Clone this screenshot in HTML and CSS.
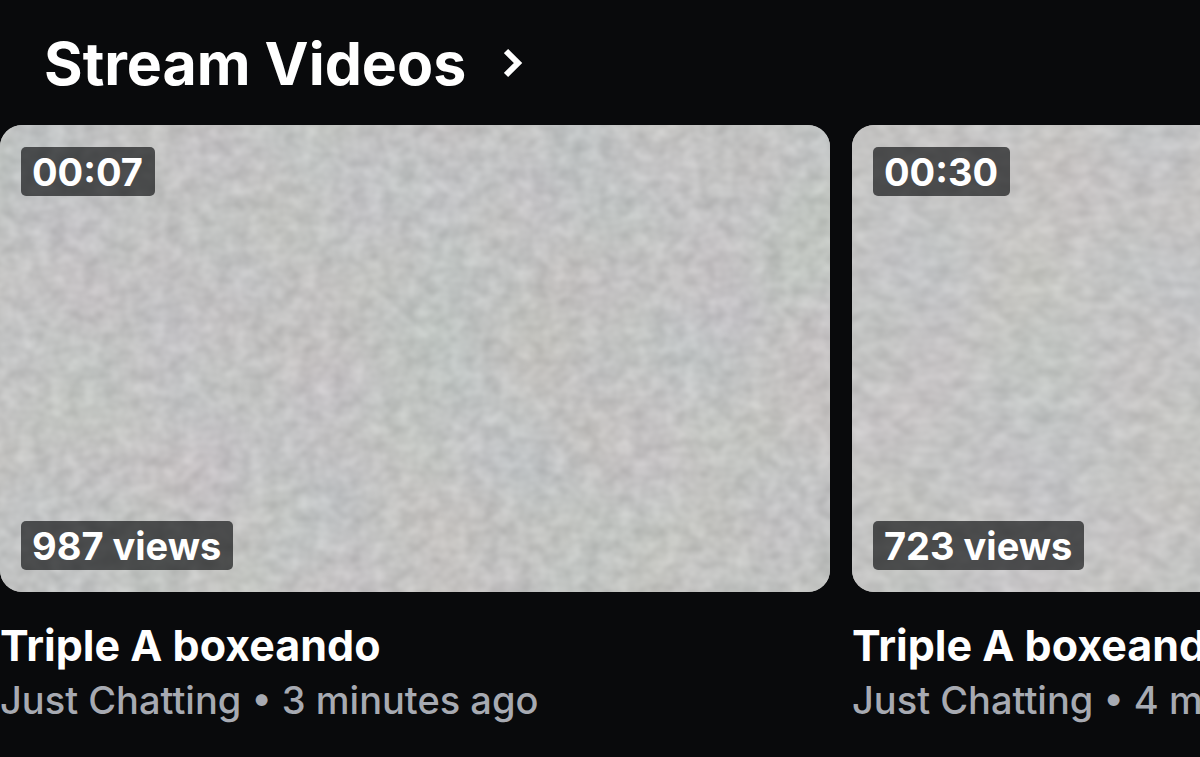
FILE: index.html
```html
<!DOCTYPE html>
<html lang="en">

<head>
    <meta charset="utf-8">
    <meta name="viewport" content="width=device-width, initial-scale=1.0">
    <title>Stream Videos</title>
    <link rel="stylesheet" href="styles.css">
</head>

<body>
    <section class="videos">
        <h2 class="videos-heading">
            <a href="#" class="videos-link">
                Stream Videos
                <svg class="chevron" viewBox="0 0 20 32" aria-hidden="true">
                    <path d="M2 3 L14 15 L2 27" />
                </svg>
            </a>
        </h2>

        <div class="video-row">
            <article class="video-card">
                <a href="#" class="thumb" aria-label="Triple A boxeando">
                    <svg class="static" aria-hidden="true">
                        <filter id="static-a" x="0" y="0" width="100%" height="100%" color-interpolation-filters="sRGB">
                            <feTurbulence type="fractalNoise" baseFrequency="0.06 0.07" numOctaves="2" seed="4" result="grain" />
                            <feColorMatrix in="grain" values="0.15 0 0 0 0.685  0.15 0 0 0 0.688  0.15 0 0 0 0.685  0 0 0 0 1" result="gray" />
                            <feTurbulence type="fractalNoise" baseFrequency="0.008" numOctaves="2" seed="9" result="tint" />
                            <feColorMatrix in="tint" values="0.04 0 0 0 0.48  0 0.03 0 0 0.485  0 0 0.04 0 0.48  0 0 0 0 1" result="soft" />
                            <feComposite in="gray" in2="soft" operator="arithmetic" k2="1" k3="1" k4="-0.5" />
                        </filter>
                        <rect width="100%" height="100%" filter="url(#static-a)" />
                    </svg>
                    <span class="badge badge-time">00:07</span>
                    <span class="badge badge-views">987 views</span>
                </a>
                <h3 class="video-title">Triple A boxeando</h3>
                <p class="video-meta">Just Chatting • 3 minutes ago</p>
            </article>

            <article class="video-card">
                <a href="#" class="thumb" aria-label="Triple A boxeando">
                    <svg class="static" aria-hidden="true">
                        <filter id="static-b" x="0" y="0" width="100%" height="100%" color-interpolation-filters="sRGB">
                            <feTurbulence type="fractalNoise" baseFrequency="0.05 0.07" numOctaves="2" seed="21" result="grain" />
                            <feColorMatrix in="grain" values="0.14 0 0 0 0.698  0.14 0 0 0 0.698  0.14 0 0 0 0.696  0 0 0 0 1" result="gray" />
                            <feTurbulence type="fractalNoise" baseFrequency="0.008" numOctaves="2" seed="30" result="tint" />
                            <feColorMatrix in="tint" values="0.03 0 0 0 0.485  0 0.02 0 0 0.49  0 0 0.03 0 0.485  0 0 0 0 1" result="soft" />
                            <feComposite in="gray" in2="soft" operator="arithmetic" k2="1" k3="1" k4="-0.5" />
                        </filter>
                        <rect width="100%" height="100%" filter="url(#static-b)" />
                    </svg>
                    <span class="badge badge-time">00:30</span>
                    <span class="badge badge-views">723 views</span>
                </a>
                <h3 class="video-title">Triple A boxeando</h3>
                <p class="video-meta">Just Chatting • 4 minutes ago</p>
            </article>
        </div>
    </section>
</body>

</html>
```

FILE: styles.css
```css
* {
    box-sizing: border-box;
}

body {
    margin: 0;
    background-color: #090a0c;
    color: #fff;
    font-family: Inter, "Liberation Sans", sans-serif;
}

a {
    color: inherit;
    text-decoration: none;
}

.videos {
    overflow: hidden;
}

.videos-heading {
    margin: 0;
    padding: 28px 44px 25px;
    font-size: 59px;
    font-weight: 700;
    line-height: 72px;
}

.videos-link {
    display: inline-flex;
    align-items: center;
    gap: 38px;
}

.chevron {
    width: 20px;
    height: 32px;
    fill: none;
    stroke: #fff;
    stroke-width: 6;
}

.video-row {
    display: flex;
    gap: 22px;
}

.video-card {
    flex: 0 0 830px;
}

.thumb {
    display: block;
    position: relative;
    aspect-ratio: 16 / 9;
    border-radius: 22px;
    overflow: hidden;
    background-color: #c4c5c4;
}

.static {
    display: block;
    width: 100%;
    height: 100%;
}

.badge {
    position: absolute;
    left: 21px;
    padding: 2px 12px 0 11px;
    border-radius: 5px;
    background-color: rgba(9, 10, 12, 0.65);
    font-size: 38px;
    font-weight: 700;
    line-height: 47px;
}

.badge-time {
    top: 22px;
}

.badge-views {
    bottom: 22px;
}

.video-title {
    margin: 26px 0 0;
    font-size: 43px;
    font-weight: 700;
    line-height: 54px;
}

.video-meta {
    margin: 4px 0 0;
    color: #a7aab2;
    font-size: 38px;
    font-weight: 500;
    line-height: 48px;
}
```
